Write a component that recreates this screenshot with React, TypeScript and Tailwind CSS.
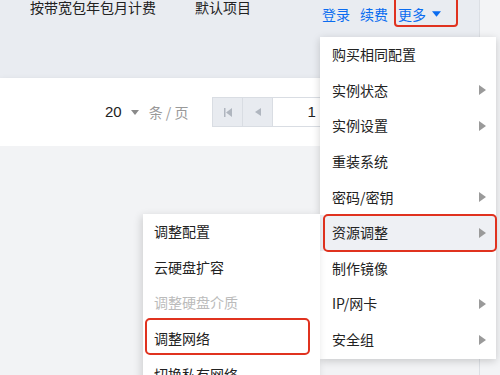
import { useState } from "react";

const MAIN_MENU = [
  { label: "购买相同配置" },
  { label: "实例状态", sub: true },
  { label: "实例设置", sub: true },
  { label: "重装系统" },
  { label: "密码/密钥", sub: true },
  { label: "资源调整", sub: true, active: true },
  { label: "制作镜像" },
  { label: "IP/网卡", sub: true },
  { label: "安全组", sub: true },
];

const SUB_MENU = [
  { label: "调整配置" },
  { label: "云硬盘扩容" },
  { label: "调整硬盘介质", disabled: true },
  { label: "调整网络", marked: true },
  { label: "切换私有网络" },
];

function Caret({ className }: { className?: string }) {
  return (
    <svg className={className} viewBox="0 0 10 6" fill="currentColor">
      <path d="M0 0h10L5 6z" />
    </svg>
  );
}

function ArrowRight() {
  return (
    <svg className="w-[7px] h-[10px] text-[#9a9a9a]" viewBox="0 0 7 10" fill="currentColor">
      <path d="M0 0l7 5-7 5z" />
    </svg>
  );
}

export default function App() {
  const [pageSize] = useState(20);

  return (
    <div
      className="relative w-[500px] h-[375px] overflow-hidden bg-[#f1f2f4] text-[14px] text-[#222]"
      style={{ fontFamily: '"Noto Sans CJK SC", "Liberation Sans", sans-serif' }}
    >
      <div className="flex h-full">
        {/* table area */}
        <div className="w-[480px] flex flex-col border-r border-[#dcdfe4]">
          <div className="h-[78px] bg-[#e9ecf1] flex items-start">
            <span className="ml-[30px] leading-[15px]">按带宽包年包月计费</span>
            <span className="ml-[39px] leading-[15px]">默认项目</span>
            <div className="ml-auto mr-[38px] mt-[6px] flex items-center text-[#0a6cf0] leading-[16px]">
              <span>登录</span>
              <span className="ml-[10px]">续费</span>
              <div className="relative ml-[10px] flex items-center">
                <span>更多</span>
                <Caret className="ml-[6px] w-[9px] h-[6px]" />
                <div className="absolute -left-[4px] -right-[17px] -top-[14px] bottom-[-5px] border-2 border-[#e0321f] rounded-[4px]" />
              </div>
            </div>
          </div>
          <div className="h-[68px] bg-white shadow-[0_3px_7px_rgba(0,0,0,0.14)] flex items-center">
            <span className="ml-[105px] text-[15px] text-[#222]" style={{ fontFamily: '"Liberation Sans", sans-serif' }}>
              {pageSize}
            </span>
            <Caret className="ml-[9px] w-[8px] h-[5px] text-[#8a8a8a]" />
            <span className="ml-[10px] text-[#999]">条 / 页</span>
            <div className="ml-[24px] flex h-[30px] border border-[#d9dde3]">
              <div className="w-[30px] bg-[#e8ebf0] border-r border-[#d9dde3] flex items-center justify-center">
                <svg className="w-[8px] h-[9px] text-[#b0b6bf]" viewBox="0 0 8 9" fill="currentColor">
                  <rect x="0" y="0" width="1.5" height="9" />
                  <path d="M8 0v9L2 4.5z" />
                </svg>
              </div>
              <div className="w-[30px] bg-[#e8ebf0] border-r border-[#d9dde3] flex items-center justify-center">
                <svg className="w-[6px] h-[8px] text-[#b0b6bf]" viewBox="0 0 6 8" fill="currentColor">
                  <path d="M6 0v8L0 4z" />
                </svg>
              </div>
              <div className="w-[60px] bg-white flex items-center pl-[34px] text-[15px] text-[#222]" style={{ fontFamily: '"Liberation Sans", sans-serif' }}>
                1
              </div>
            </div>
          </div>
          <div className="flex-1 bg-[#f2f3f5]" />
        </div>
        <div className="flex-1 bg-[#f3f4f6]" />
      </div>

      {/* main dropdown */}
      <div className="absolute left-[320px] top-[37px] w-[176px] bg-white shadow-[0_2px_8px_rgba(0,0,0,0.18)]">
        {MAIN_MENU.map((item) => (
          <div
            key={item.label}
            className={`relative h-[35.6px] flex items-center pl-[12px] pr-[10px] ${item.active ? "bg-[#eef0f4]" : ""}`}
          >
            <span className="flex-1">{item.label}</span>
            {item.sub && <ArrowRight />}
            {item.active && (
              <div className="absolute left-[3px] -right-[1px] top-[-1px] bottom-[-1px] border-2 border-[#e0321f] rounded-[5px]" />
            )}
          </div>
        ))}
        <div className="h-[2px]" />
      </div>

      {/* sub menu */}
      <div className="absolute left-[143px] top-[214px] w-[177px] bg-white shadow-[-2px_2px_8px_rgba(0,0,0,0.14)]">
        {SUB_MENU.map((item) => (
          <div
            key={item.label}
            className={`relative h-[35.6px] flex items-center pl-[11px] ${item.disabled ? "text-[#bbb]" : ""}`}
          >
            {item.label}
            {item.marked && (
              <div className="absolute left-[2px] right-[10px] top-[-3px] bottom-[1px] border-2 border-[#e0321f] rounded-[5px]" />
            )}
          </div>
        ))}
      </div>
    </div>
  );
}
